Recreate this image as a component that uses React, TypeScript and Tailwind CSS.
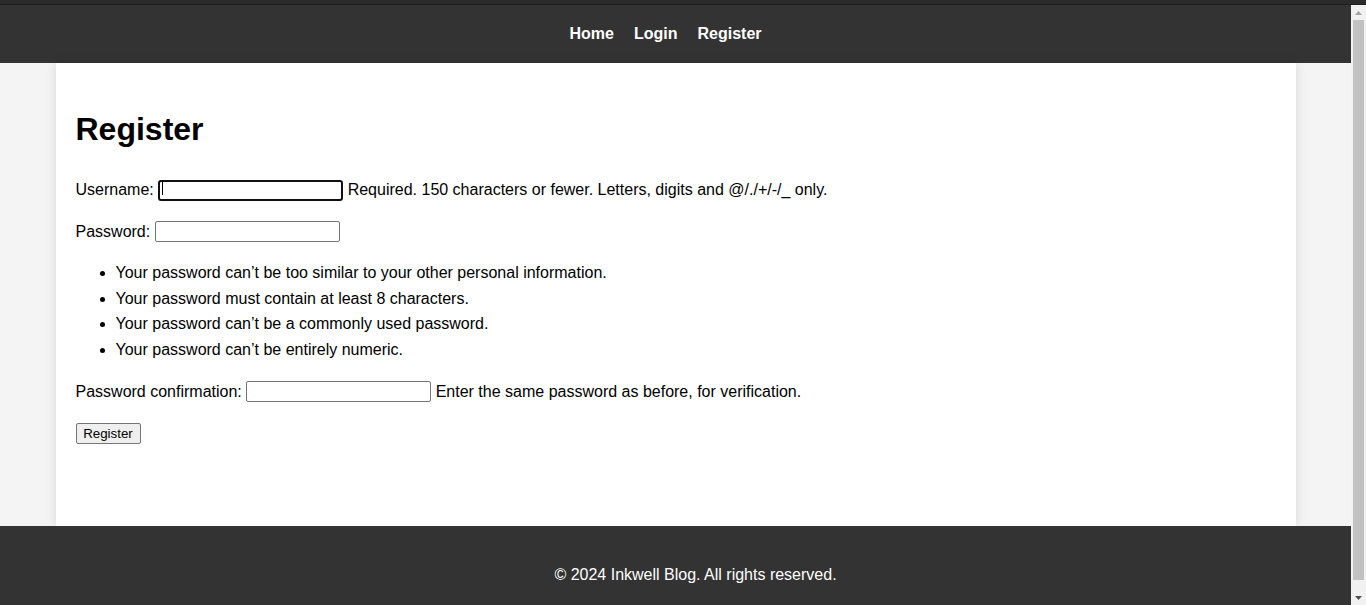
const navLinks = ["Home", "Login", "Register"];

const passwordRules = [
  "Your password can’t be too similar to your other personal information.",
  "Your password must contain at least 8 characters.",
  "Your password can’t be a commonly used password.",
  "Your password can’t be entirely numeric.",
];

const inputClass =
  "inline-block w-[185px] h-[21px] px-[3px] text-[13.33px] leading-normal bg-white border border-[#767676] rounded-[2px] align-[1px]";

// the browser's scrollbar, as it shows in the picture
const Scrollbar = () => (
  <div className="w-[15px] h-[600px] shrink-0 bg-[#f1f1f1] flex flex-col">
    <div className="h-[15px] flex items-center justify-center">
      <svg width="7" height="4" viewBox="0 0 7 4">
        <polygon points="3.5,0 7,4 0,4" fill="#a3a3a3" />
      </svg>
    </div>
    <div className="h-[560px] w-[11px] mx-auto bg-[#c1c1c1]" />
    <div className="flex-1" />
    <div className="h-[15px] flex items-center justify-center">
      <svg width="7" height="4" viewBox="0 0 7 4">
        <polygon points="0,0 7,0 3.5,4" fill="#505050" />
      </svg>
    </div>
  </div>
);

const App = () => {
  return (
    <div className="bg-[#f4f4f4] font-['Liberation_Sans',Arial,sans-serif] text-[16px] leading-[1.6] text-black">
      <div className="h-[5px] bg-[#2b2b2b] border-b border-[#1e1e1e]" />
      <div className="flex items-start">
        <div className="flex-1 min-w-0">
          <header className="h-[58px] bg-[#333333] flex items-center justify-center">
            <nav className="flex">
              {navLinks.map((link) => (
                <a key={link} href="#" className="mr-5 font-bold text-white">
                  {link}
                </a>
              ))}
            </nav>
          </header>

          <main className="mx-auto w-[1240px] h-[463px] bg-white p-5 shadow-[0_0_10px_rgba(0,0,0,0.12)]">
            <h1 className="text-[32px] font-bold my-[21.44px]">Register</h1>
            <form>
              <p className="my-4">
                Username:{" "}
                <span className="relative inline-block">
                  <input
                    type="text"
                    className="inline-block w-[185px] h-[21px] px-[3px] text-[13.33px] leading-normal bg-white border-2 border-[#101010] rounded-[3px] outline-none"
                  />
                  <span className="absolute left-[4px] top-[3px] w-px h-[15px] bg-black" />
                </span>{" "}
                Required. 150 characters or fewer. Letters, digits and @/./+/-/_ only.
              </p>
              <p className="my-4">
                Password: <input type="password" className={inputClass} />
              </p>
              <ul className="my-4 pl-10 list-disc">
                {passwordRules.map((rule) => (
                  <li key={rule}>{rule}</li>
                ))}
              </ul>
              <p className="my-4">
                Password confirmation: <input type="password" className={inputClass} /> Enter
                the same password as before, for verification.
              </p>
              <button
                type="submit"
                className="w-[65px] h-[21px] text-[13.33px] leading-[15px] text-center bg-[#efefef] border border-[#767676] rounded-[2px]"
              >
                Register
              </button>
            </form>
          </main>

          <footer className="bg-[#333333] text-white text-center py-5 pl-10">
            <p className="my-4">© 2024 Inkwell Blog. All rights reserved.</p>
          </footer>
        </div>
        <Scrollbar />
      </div>
    </div>
  );
};

export default App;
